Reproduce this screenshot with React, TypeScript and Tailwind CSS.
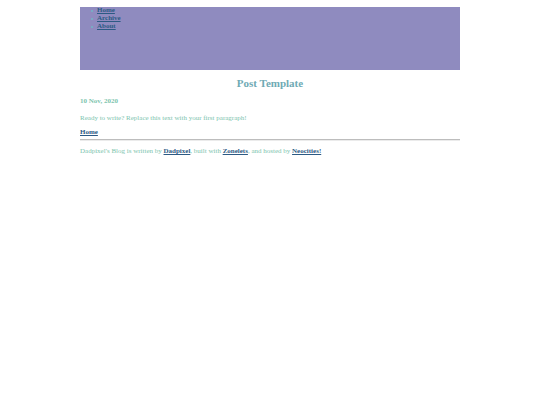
const navLinks = [
  { label: "Home", href: "#home" },
  { label: "Archive", href: "#archive" },
  { label: "About", href: "#about" },
];

const linkCls = "font-bold text-[#2c5a84] underline";

export default function App() {
  return (
    <div className="mx-auto max-w-[380px] pt-[7px] font-['Liberation_Serif',serif] text-[7px] leading-[8px] text-[#7cc4ae]">
      <header className="h-[63px] bg-[#8f8bbf]">
        <nav>
          <ul className="flex flex-col gap-px pl-[11px] leading-[7px]">
            {navLinks.map((link) => (
              <li key={link.label} className="flex items-center gap-[4px]">
                <span className="size-[2px] bg-[#79abc4]" />
                <a href={link.href} className={linkCls}>{link.label}</a>
              </li>
            ))}
          </ul>
        </nav>
      </header>

      <main className="pt-[7px]">
        <h1 className="text-center text-[11px] leading-[12px] font-bold text-[#6faab4]">Post Template</h1>
        <h4 className="mt-[8px] font-bold">10 Nov, 2020</h4>
        <p className="mt-[9px]">Ready to write? Replace this text with your first paragraph!</p>
        <nav className="mt-[6px]">
          <a href="#home" className={linkCls}>Home</a>
        </nav>
      </main>

      <footer>
        <hr className="mt-[3px] border-t border-b border-t-[#bdbdbd] border-b-[#ebebeb]" />
        <p className="mt-[6px]">
          Dadpixel&apos;s Blog is written by <a href="#dadpixel" className={linkCls}>Dadpixel</a>, built with{" "}
          <a href="#zonelets" className={linkCls}>Zonelets</a>, and hosted by{" "}
          <a href="#neocities" className={linkCls}>Neocities!</a>
        </p>
      </footer>
    </div>
  );
}
